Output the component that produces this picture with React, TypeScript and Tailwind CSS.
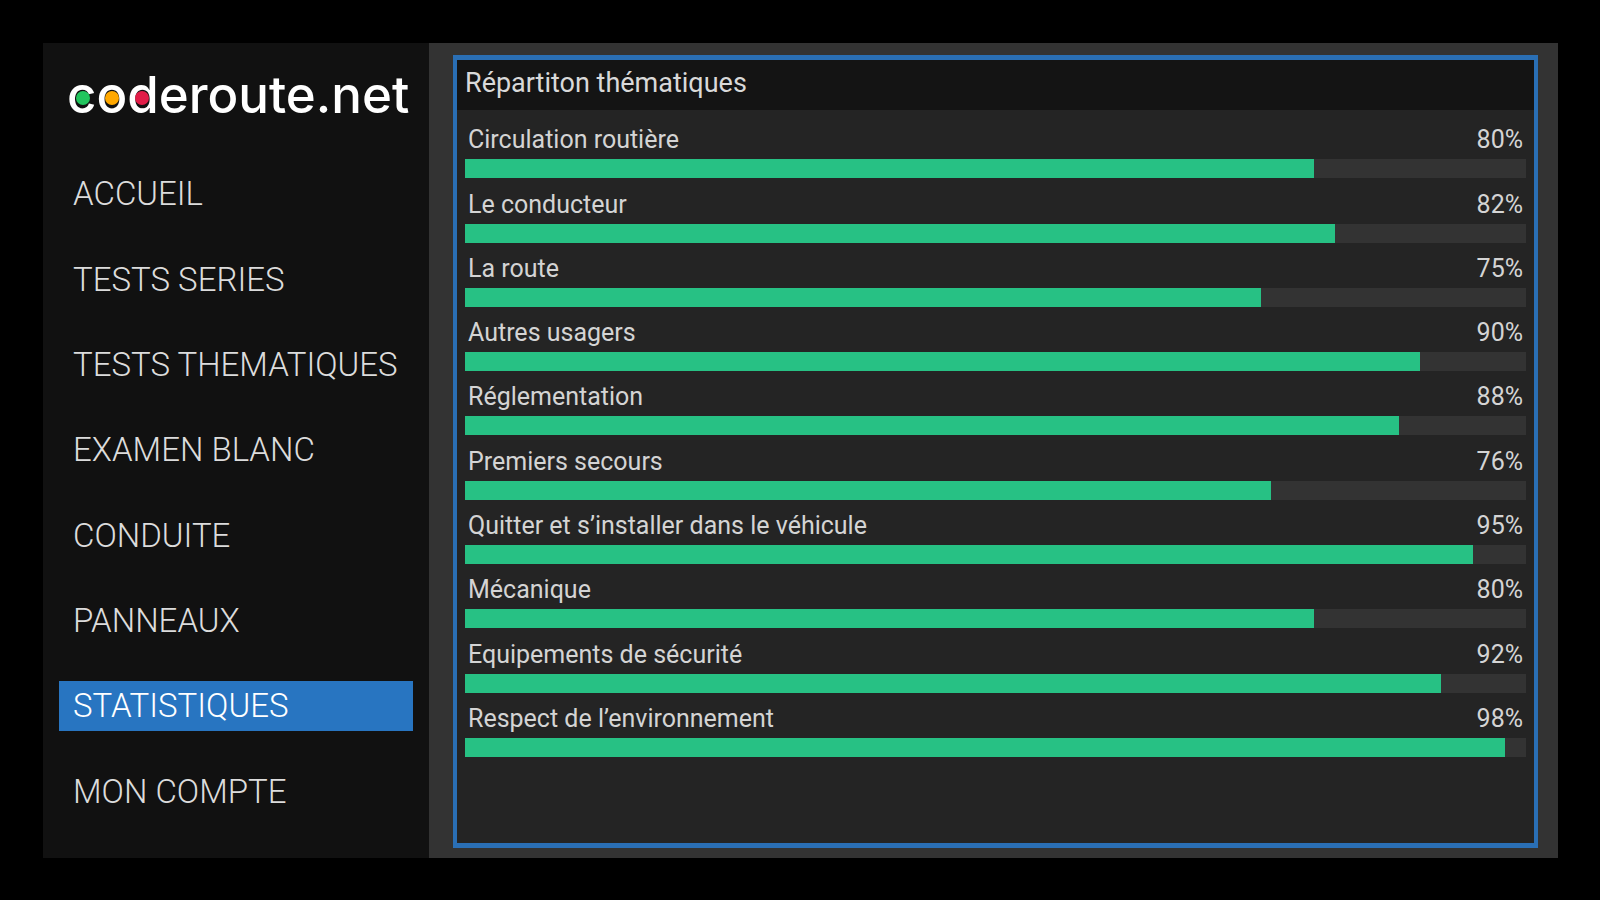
interface MenuItem {
  label: string;
  active?: boolean;
}

interface Theme {
  name: string;
  score: number;
}

const menu: MenuItem[] = [
  { label: 'ACCUEIL' },
  { label: 'TESTS SERIES' },
  { label: 'TESTS THEMATIQUES' },
  { label: 'EXAMEN BLANC' },
  { label: 'CONDUITE' },
  { label: 'PANNEAUX' },
  { label: 'STATISTIQUES', active: true },
  { label: 'MON COMPTE' },
];

const themes: Theme[] = [
  { name: 'Circulation routière', score: 80 },
  { name: 'Le conducteur', score: 82 },
  { name: 'La route', score: 75 },
  { name: 'Autres usagers', score: 90 },
  { name: 'Réglementation', score: 88 },
  { name: 'Premiers secours', score: 76 },
  { name: 'Quitter et s’installer dans le véhicule', score: 95 },
  { name: 'Mécanique', score: 80 },
  { name: 'Equipements de sécurité', score: 92 },
  { name: 'Respect de l’environnement', score: 98 },
];

// First three letters of the logo carry the traffic light colours
const lights = [
  { letter: 'c', dot: 'left-[55%] bg-[#22c55e]' },
  { letter: 'o', dot: 'left-1/2 bg-[#ffa800]' },
  { letter: 'd', dot: 'left-[48%] bg-[#e11d48]' },
];

function Logo() {
  return (
    <a
      href="#"
      aria-label="coderoute.net"
      className="flex h-[108px] items-center px-2 pb-1.5 font-['Inter',sans-serif] text-[51px] leading-none font-medium text-white"
    >
      {lights.map((light) => (
        <span key={light.letter} className="relative">
          {light.letter}
          <span className={`absolute top-[22px] size-3.5 -translate-x-1/2 rounded-full ${light.dot}`} />
        </span>
      ))}
      <span>eroute.net</span>
    </a>
  );
}

function Sidebar() {
  return (
    <aside className="flex w-[386px] shrink-0 flex-col bg-[#111111] px-4 pb-6">
      <Logo />
      <nav className="flex flex-1 flex-col">
        {menu.map((item) => (
          <div key={item.label} className="flex flex-1 items-center">
            <a
              href="#"
              aria-current={item.active ? 'page' : undefined}
              className={`flex h-[50px] w-full items-center px-3.5 text-[33px] leading-none font-light whitespace-nowrap ${
                item.active ? 'bg-[#2875c1] text-white' : 'text-[#dcdcdc]'
              }`}
            >
              {item.label}
            </a>
          </div>
        ))}
      </nav>
    </aside>
  );
}

function ThemeRow({ theme }: { theme: Theme }) {
  return (
    <li className="flex flex-1 flex-col justify-end">
      <div className="flex items-center justify-between px-[3px] pb-1 text-[25px] leading-[30px] text-[#d4d4d4]">
        <span>{theme.name}</span>
        <span>{theme.score}%</span>
      </div>
      <div className="h-[19px] bg-[#333333]">
        <div className="h-full bg-[#27c184]" style={{ width: `${theme.score}%` }} />
      </div>
    </li>
  );
}

export default function App() {
  return (
    <div className="flex min-h-screen bg-black pt-[43px] pr-[42px] pb-[42px] pl-[43px] font-['Roboto',sans-serif]">
      <Sidebar />
      <main className="flex flex-1 bg-[#333333] pt-3 pr-5 pb-2.5 pl-6">
        <section className="flex flex-1 flex-col border-4 border-y-[5px] border-[#2a6fb5] bg-[#242424]">
          <h1 className="flex h-[50px] items-center bg-[#141414] px-2 pb-1 text-[27px] leading-none text-[#d9d9d9]">
            Répartiton thématiques
          </h1>
          <ul className="flex flex-1 flex-col px-2 pt-1 pb-[86px]">
            {themes.map((theme) => (
              <ThemeRow key={theme.name} theme={theme} />
            ))}
          </ul>
        </section>
      </main>
    </div>
  );
}
